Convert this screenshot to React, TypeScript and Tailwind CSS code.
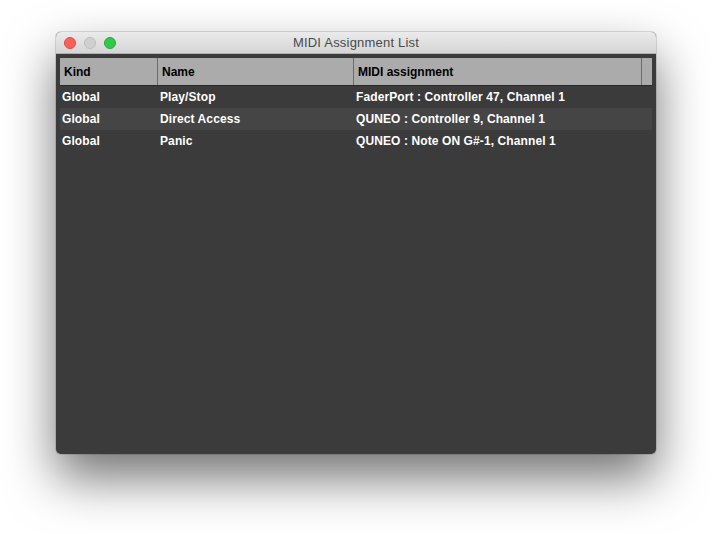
import React from 'react';

type Row = { kind: string; name: string; midi: string };

const rows: Row[] = [
  { kind: 'Global', name: 'Play/Stop', midi: 'FaderPort : Controller 47, Channel 1' },
  { kind: 'Global', name: 'Direct Access', midi: 'QUNEO : Controller 9, Channel 1' },
  { kind: 'Global', name: 'Panic', midi: 'QUNEO : Note ON G#-1, Channel 1' },
];

export default function App() {
  return (
    <div className="w-[712px] h-[534px] bg-white pt-[32px] pl-[56px] font-['Liberation_Sans',sans-serif]">
      <div className="w-[600px] h-[422px] rounded-[5px] overflow-hidden bg-[#3b3b3b] flex flex-col shadow-[0_0_0_1px_rgba(0,0,0,0.12),0_24px_50px_rgba(0,0,0,0.55)]">
        {/* title bar */}
        <div className="relative h-[22px] shrink-0 bg-gradient-to-b from-[#ebebeb] to-[#d5d5d5] border-b border-[#b0b0b0] flex items-center justify-center">
          <div className="absolute left-[8px] top-[5px] flex gap-[8px]">
            <span className="w-[12px] h-[12px] rounded-full bg-[#fc605c] border border-[#de4a45]" />
            <span className="w-[12px] h-[12px] rounded-full bg-[#d0d0d0] border border-[#bdbdbd]" />
            <span className="w-[12px] h-[12px] rounded-full bg-[#34c84a] border border-[#28a83a]" />
          </div>
          <span className="text-[13px] text-[#4a4a4a] tracking-[0.2px] pt-[1px]">MIDI Assignment List</span>
        </div>

        {/* table */}
        <div className="pt-[4px] pl-[4px] pr-[4px] flex-1 flex flex-col">
          <div className="flex h-[28px] bg-[#ababab] border-b border-[#2a2a2a] text-[12px] font-bold text-black">
            <div className="w-[98px] border-r border-[#6c6c6c] flex items-center pl-[4px]">Kind</div>
            <div className="w-[196px] border-r border-[#6c6c6c] flex items-center pl-[4px]">Name</div>
            <div className="w-[288px] border-r border-[#6c6c6c] flex items-center pl-[4px]">MIDI assignment</div>
            <div className="flex-1" />
          </div>
          {rows.map((r, i) => (
            <div
              key={r.name}
              className={`flex h-[22px] items-center text-[12px] font-bold text-white tracking-[0.1px] ${i % 2 === 1 ? 'bg-[#454545]' : 'bg-[#3b3b3b]'}`}
            >
              <div className="w-[98px] pl-[2px]">{r.kind}</div>
              <div className="w-[196px] pl-[2px]">{r.name}</div>
              <div className="pl-[2px]">{r.midi}</div>
            </div>
          ))}
        </div>
      </div>
    </div>
  );
}
